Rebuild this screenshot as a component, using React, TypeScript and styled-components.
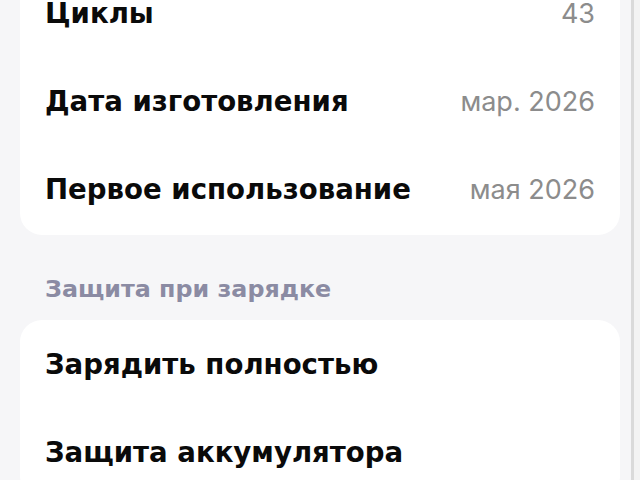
import React from "react";
import styled, { createGlobalStyle } from "styled-components";

const Global = createGlobalStyle`
  html, body { margin: 0; padding: 0; background: #f6f6f8; }
  body { font-family: "Inter", "Noto Sans", "Liberation Sans", sans-serif; overflow: hidden; }
`;

const Shell = styled.div`
  display: grid;
  grid-template-columns: 1fr 3px 6px;
  width: 640px;
  height: 480px;
  overflow: hidden;
  background: #f6f6f8;
`;

const Content = styled.div`
  padding: 0 11px 0 20px;
  margin-top: -31px;
`;

const ScrollTrack = styled.div`
  background: #dadada;
`;

const Gutter = styled.div`
  background: #f3f3f3;
`;

const Card = styled.div`
  background: #ffffff;
  border-radius: 22px;
  padding: 1px 0;
`;

const Row = styled.div`
  height: 88px;
  display: flex;
  align-items: center;
  justify-content: space-between;
  padding: 0 25px;
`;

const Label = styled.span`
  font-family: "DejaVu Sans", "Noto Sans", sans-serif;
  font-size: 27.6px;
  font-weight: 700;
  color: #0a0a0a;
  line-height: 26px;
`;

const Value = styled.span`
  font-size: 27px;
  font-weight: 400;
  color: #8c8c8c;
  line-height: 26px;
`;

const SectionTitle = styled.div`
  padding: 40px 25px 17px;
  line-height: 28px;
  font-family: "DejaVu Sans", "Noto Sans", sans-serif;
  font-size: 23.8px;
  font-weight: 700;
  color: #8b8ba3;
`;

const info = [
  { label: "Циклы", value: "43" },
  { label: "Дата изготовления", value: "мар. 2026" },
  { label: "Первое использование", value: "мая 2026" },
];

const protection = ["Зарядить полностью", "Защита аккумулятора"];

export default function App() {
  return (
    <>
      <Global />
      <Shell>
        <Content>
          <Card>
            {info.map((r) => (
              <Row key={r.label}>
                <Label>{r.label}</Label>
                <Value>{r.value}</Value>
              </Row>
            ))}
          </Card>
          <SectionTitle>Защита при зарядке</SectionTitle>
          <Card>
            {protection.map((l) => (
              <Row key={l}>
                <Label>{l}</Label>
              </Row>
            ))}
          </Card>
        </Content>
        <ScrollTrack />
        <Gutter />
      </Shell>
    </>
  );
}
